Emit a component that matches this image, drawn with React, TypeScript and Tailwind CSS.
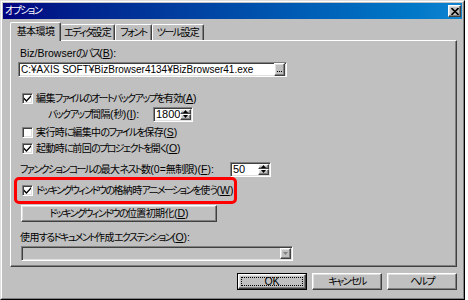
import React from "react";

const sunken =
  "border border-t-[#808080] border-l-[#808080] border-r-white border-b-white shadow-[inset_1px_1px_0_#404040,inset_-1px_-1px_0_#dfdfdf]";
const raised =
  "border border-t-white border-l-white border-r-[#404040] border-b-[#404040] shadow-[inset_-1px_-1px_0_#808080,inset_1px_1px_0_#dfdfdf]";

// Text helper: "&X" marks an underlined access key; kana, kanji and latin runs get their own spacing.
function T({ s }: { s: string }) {
  const re = /&(.)|([\u3000-\u30ff\uff00-\uffef]+)|([\u4e00-\u9fff]+)|([^&\u3000-\u30ff\uff00-\uffef\u4e00-\u9fff]+)/g;
  const out: React.ReactNode[] = [];
  let i = 0;
  for (const m of s.matchAll(re)) {
    if (m[1]) {
      out.push(
        <span key={i++} className="underline underline-offset-1 text-[10.5px]">
          {m[1]}
        </span>
      );
    } else if (m[2]) {
      out.push(
        <span key={i++} className="tracking-[-1.6px]">
          {m[2]}
        </span>
      );
    } else if (m[3]) {
      out.push(
        <span key={i++} className="tracking-[-0.6px]">
          {m[3]}
        </span>
      );
    } else {
      out.push(
        <span key={i++} className="text-[10.5px]">
          {m[4]}
        </span>
      );
    }
  }
  return <>{out}</>;
}

function Check({ checked }: { checked: boolean }) {
  return (
    <span className={`w-[11px] h-[11px] bg-white flex items-center justify-center shrink-0 ${sunken}`}>
      {checked && (
        <svg width="7" height="7" viewBox="0 0 7 7">
          <path d="M0 2.5 L0 4.5 L2.5 7 L7 2 L7 0 L2.5 5 Z" fill="black" />
        </svg>
      )}
    </span>
  );
}

function Arrow({ up, color = "black" }: { up: boolean; color?: string }) {
  return (
    <svg width="5" height="3" viewBox="0 0 5 3">
      {up ? <path d="M2.5 0 L5 3 L0 3 Z" fill={color} /> : <path d="M0 0 L5 0 L2.5 3 Z" fill={color} />}
    </svg>
  );
}

function Spin({ value, w }: { value: string; w: string }) {
  return (
    <div className={`h-[15px] flex bg-white p-px ${sunken} ${w}`}>
      <span className="flex-1 pl-[1px] leading-[11px] text-[11px]">{value}</span>
      <div className="flex flex-col w-[11px] h-full">
        <div className={`flex-1 bg-[#c0c0c0] flex items-center justify-center ${raised}`}>
          <Arrow up />
        </div>
        <div className={`flex-1 bg-[#c0c0c0] flex items-center justify-center ${raised}`}>
          <Arrow up={false} />
        </div>
      </div>
    </div>
  );
}

function CheckRow({ checked, s, className = "" }: { checked: boolean; s: string; className?: string }) {
  return (
    <div className={`h-[16px] flex items-center gap-[3px] ${className}`}>
      <Check checked={checked} />
      <span className="whitespace-nowrap leading-none">
        <T s={s} />
      </span>
    </div>
  );
}

function Btn({ s, def = false }: { s: string; def?: boolean }) {
  if (def) {
    return (
      <div className="w-[70px] h-[17px] border border-black">
        <div className={`w-full h-full bg-[#c0c0c0] flex items-center justify-center p-[2px] ${raised}`}>
          <div className="w-full h-full border border-dotted border-black flex items-center justify-center leading-none">
            <T s={s} />
          </div>
        </div>
      </div>
    );
  }
  return (
    <div className={`w-[70px] h-[17px] bg-[#c0c0c0] flex items-center justify-center leading-none ${raised}`}>
      <T s={s} />
    </div>
  );
}

const tabBase =
  "h-[16px] border-t border-r border-t-white border-r-[#404040] shadow-[inset_-1px_0_0_#808080] rounded-t-[2px] flex items-center justify-center leading-none";

export default function App() {
  return (
    <div className="w-[468px] h-[300px] bg-white overflow-hidden font-['Liberation_Sans','Noto_Sans_CJK_JP',sans-serif] text-[10px] text-black [font-feature-settings:'palt']">
      <div className="w-[465px] h-[300px] border border-t-[#dfdfdf] border-l-[#dfdfdf] border-r-black border-b-black">
        <div className="h-full border border-t-white border-l-white border-r-[#808080] border-b-[#808080] bg-[#c0c0c0] p-px flex flex-col">
          {/* Title bar */}
          <div className="h-[16px] flex items-center bg-linear-to-r from-[#000080] to-[#1084d0] pl-[2px] pr-[1px]">
            <span className="text-white leading-none">
              <T s="オプション" />
            </span>
            <div className={`ml-auto w-[13px] h-[12px] bg-[#c0c0c0] flex items-center justify-center ${raised}`}>
              <svg width="8" height="7" viewBox="0 0 8 7">
                <path d="M0.5 0 L4 3.5 L7.5 0 M0.5 7 L4 3.5 L7.5 7" stroke="black" strokeWidth="1.6" fill="none" />
              </svg>
            </div>
          </div>

          {/* Tabs */}
          <div className="mt-[3px] ml-[7px] h-[18px] flex items-end">
            <div className="relative z-10 h-[19px] -mb-px w-[51px] bg-[#c0c0c0] border-t border-l border-r border-t-white border-l-white border-r-[#404040] shadow-[inset_-1px_0_0_#808080] rounded-t-[2px] flex items-center justify-center leading-none">
              <T s="基本環境" />
            </div>
            <div className={`w-[54px] ${tabBase}`}>
              <T s="エディタ設定" />
            </div>
            <div className={`w-[37px] border-l border-l-white ${tabBase}`}>
              <T s="フォント" />
            </div>
            <div className={`w-[52px] border-l border-l-white ${tabBase}`}>
              <T s="ツール設定" />
            </div>
          </div>

          {/* Panel */}
          <div className="ml-[7px] w-[447px] h-[227px] border border-t-white border-l-white border-r-[#404040] border-b-[#404040] shadow-[inset_-1px_-1px_0_#808080] flex flex-col items-start">
            <div className="mt-[6px] ml-[9px] h-[12px] leading-[12px] whitespace-nowrap">
              <T s="Biz/Browserのパス(&B):" />
            </div>
            <div className={`mt-[3px] ml-[7px] w-[269px] h-[15px] bg-white flex items-center p-px ${sunken}`}>
              <span className="flex-1 pl-px whitespace-nowrap leading-none text-[10px]">
                C:¥AXIS SOFT¥BizBrowser4134¥BizBrowser41.exe
              </span>
              <div className={`w-[11px] h-[13px] -my-px bg-[#c0c0c0] flex items-end justify-center pb-[3px] ${raised}`}>
                <span className="flex gap-[1px]">
                  <span className="w-px h-px bg-black" />
                  <span className="w-px h-px bg-black" />
                  <span className="w-px h-px bg-black" />
                </span>
              </div>
            </div>

            <CheckRow checked className="mt-[13px] ml-[11px]" s="編集ファイルのオートバックアップを有効(&A)" />
            <div className="h-[16px] ml-[37px] flex items-center">
              <span className="w-[105px] whitespace-nowrap leading-none">
                <T s="バックアップ間隔(秒)(&I):" />
              </span>
              <Spin value="1800" w="w-[40px]" />
            </div>
            <CheckRow checked={false} className="mt-[2px] ml-[11px]" s="実行時に編集中のファイルを保存(&S)" />
            <CheckRow checked className="ml-[11px]" s="起動時に前回のプロジェクトを開く(&O)" />
            <div className="mt-[5px] h-[16px] ml-[9px] flex items-center">
              <span className="w-[210px] whitespace-nowrap leading-none">
                <T s="ファンクションコールの最大ネスト数(0=無制限)(&F):" />
              </span>
              <Spin value="50" w="w-[41px]" />
            </div>

            <div className="ml-[3px] w-[223px] h-[27px] border-[3px] border-[#ff0000] rounded-[5px] flex items-center pl-[5px]">
              <CheckRow checked s="ドッキングウィンドウの格納時アニメーションを使う(&W)" />
            </div>

            <div className={`mt-px ml-[10px] w-[196px] h-[17px] bg-[#c0c0c0] flex items-center justify-center leading-none ${raised}`}>
              <T s="ドッキングウィンドウの位置初期化(&D)" />
            </div>

            <div className="mt-[9px] ml-[9px] h-[12px] leading-[12px] whitespace-nowrap">
              <T s="使用するドキュメント作成エクステンション(&O):" />
            </div>
            <div className={`mt-[3px] ml-[10px] w-[272px] h-[15px] bg-[#c0c0c0] flex justify-end p-px ${sunken}`}>
              <div className={`w-[11px] h-full bg-[#c0c0c0] flex items-center justify-center ${raised}`}>
                <Arrow up={false} color="#808080" />
              </div>
            </div>
          </div>

          {/* Buttons */}
          <div className="mt-[6px] pr-[5px] flex justify-end gap-[5px]">
            <Btn def s="OK" />
            <Btn s="キャンセル" />
            <Btn s="ヘルプ" />
          </div>
        </div>
      </div>
    </div>
  );
}
